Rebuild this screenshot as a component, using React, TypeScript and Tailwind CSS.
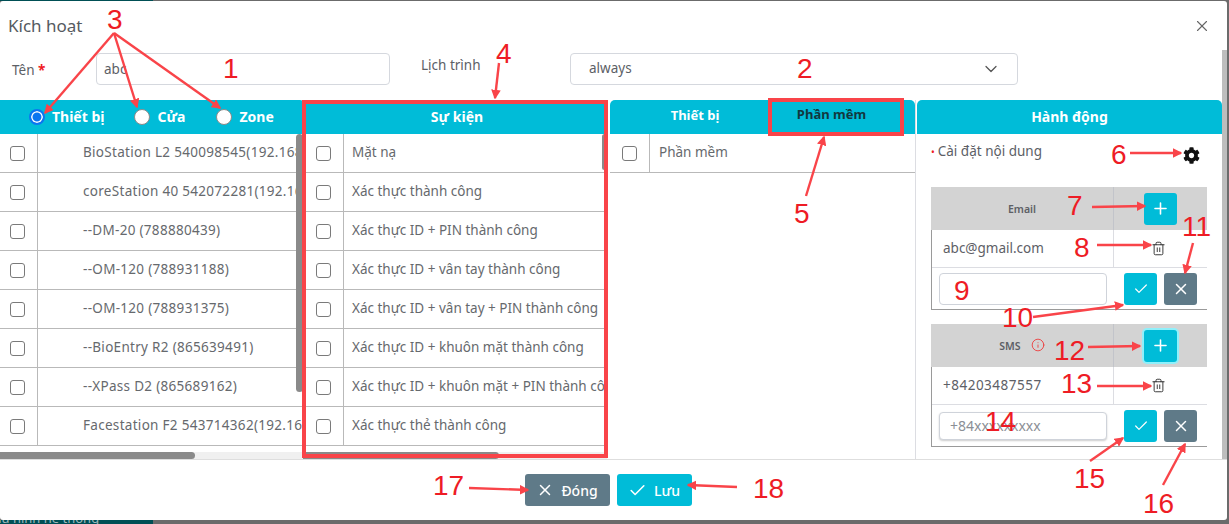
import React from "react";
import { X, Check, Plus, Trash2, ChevronDown, Info } from "lucide-react";
import { FaCog } from "react-icons/fa";

const FONT = "font-['Noto_Sans','Open_Sans',sans-serif]";

const devices = [
  "BioStation L2 540098545(192.168.1.10)",
  "coreStation 40 542072281(192.168.1.11)",
  "--DM-20 (788880439)",
  "--OM-120 (788931188)",
  "--OM-120 (788931375)",
  "--BioEntry R2 (865639491)",
  "--XPass D2 (865689162)",
  "Facestation F2 543714362(192.168.1.12)",
];
const events = [
  "Mặt nạ",
  "Xác thực thành công",
  "Xác thực ID + PIN thành công",
  "Xác thực ID + vân tay thành công",
  "Xác thực ID + vân tay + PIN thành công",
  "Xác thực ID + khuôn mặt thành công",
  "Xác thực ID + khuôn mặt + PIN thành công",
  "Xác thực thẻ thành công",
];

const Box = () => <span className="block h-[15px] w-[15px] shrink-0 rounded-[3px] border border-[#7a7a7a] bg-white" />;

function Row({ text, pad, cell }: { text: string; pad: string; cell: string }) {
  return (
    <div className="flex h-[39px] w-full shrink-0 items-center border-b border-[#b9b9b9]">
      <div className={`flex h-full shrink-0 items-center border-r border-[#b9b9b9] ${cell}`}>
        <Box />
      </div>
      <div className={`-mt-[1px] whitespace-nowrap text-[13.5px] leading-none text-[#66696d] ${pad}`}>{text}</div>
    </div>
  );
}

function Head({ children, className = "" }: { children: React.ReactNode; className?: string }) {
  return <div className={`flex h-[34px] shrink-0 items-center bg-[#00bcd8] pb-[2px] text-[14px] font-bold text-white ${className}`}>{children}</div>;
}

function Radio({ on, label, className }: { on?: boolean; label: string; className: string }) {
  return (
    <div className={`flex items-center gap-[7px] ${className}`}>
      <span className={`mt-[2px] block h-[16px] w-[16px] rounded-full ${on ? "border-2 border-[#0b76f0] bg-[#0b76f0] shadow-[inset_0_0_0_1.5px_white]" : "border border-[#8a8a8a] bg-white"}`} />
      <span>{label}</span>
    </div>
  );
}

function Sq({ tone, children, className = "" }: { tone: "cyan" | "slate"; children: React.ReactNode; className?: string }) {
  return (
    <span className={`flex h-[32px] w-[33px] items-center justify-center rounded-[3px] text-white ${tone === "cyan" ? "bg-[#00bcd8]" : "bg-[#5f7a88]"} ${className}`}>
      {children}
    </span>
  );
}

function ContactTable({ title, value, placeholder, info, focus, inputH, gap, valueClass = "" }: { title: string; value: string; placeholder?: string; info?: boolean; focus?: boolean; inputH: string; gap: string; valueClass?: string }) {
  return (
    <div className={`w-[276px] ${gap}`}>
      <div className="flex h-[43px] bg-[#d3d3d3]">
        <div className="flex w-[183px] items-center justify-center gap-[10px] border-r border-[#c2c4ca] pt-[2px] text-[10.5px] font-semibold text-[#5d6066]">
          <span>{title}</span>
          {info && <Info size={14} strokeWidth={1.4} className="-mt-[3px] text-[#ef2f2f]" />}
        </div>
        <div className="flex flex-1 items-center pl-[30px]">
          <Sq tone="cyan" className={focus ? "shadow-[0_0_0_2px_#8ff0fb]" : ""}><Plus size={19} strokeWidth={2} /></Sq>
        </div>
      </div>
      <div className="border-b border-l border-[#9a9a9a]">
        <div className="flex h-[38px] border-b border-[#dcdde2]">
          <div className={`flex w-[182px] items-center border-r border-[#dcdde2] pl-[11px] text-[13.5px] text-[#5d6066] ${valueClass}`}>{value}</div>
          <div className="flex flex-1 items-center pl-[37px]"><Trash2 size={15} strokeWidth={1.4} className="text-[#222]" /></div>
        </div>
        <div className="flex h-[41px] items-center">
          <div className="w-[182px] pl-[7px]">
            <div className={`flex w-[168px] items-center rounded-[4px] border border-[#cfd3da] bg-white pl-[10px] text-[14px] text-[#8b8f96] ${inputH}`}>{placeholder}</div>
          </div>
          <div className="flex gap-[7px] pl-[10px]">
            <Sq tone="cyan"><Check size={16} strokeWidth={1.8} /></Sq>
            <Sq tone="slate"><X size={18} strokeWidth={2} /></Sq>
          </div>
        </div>
      </div>
    </div>
  );
}

const arrows: [number, number, number, number][] = [
  [114, 33, 45, 113], [114, 33, 137, 107], [114, 33, 220, 108],
  [499, 63, 495, 98], [806, 196, 824, 137], [1130, 153, 1181, 153],
  [1092, 207, 1145, 206], [1097, 245, 1151, 245], [1193, 243, 1185, 273],
  [1033, 317, 1123, 305], [1088, 347, 1140, 346], [1097, 386, 1151, 386],
  [1090, 461, 1123, 438], [1163, 485, 1185, 444], [469, 488, 528, 490], [737, 487, 688, 485],
];

const labels: [string, string][] = [
  ["1", "left-[223px] top-[53px]"], ["2", "left-[797px] top-[53px]"], ["3", "left-[107px] top-[4px]"],
  ["4", "left-[496px] top-[38px]"], ["5", "left-[794px] top-[198px]"], ["6", "left-[1111px] top-[139px]"],
  ["7", "left-[1067px] top-[190px]"], ["8", "left-[1074px] top-[232px]"], ["9", "left-[954px] top-[275px]"],
  ["10", "left-[1002px] top-[302px]"], ["11", "left-[1182px] top-[211px]"], ["12", "left-[1054px] top-[335px]"],
  ["13", "left-[1061px] top-[368px]"], ["14", "left-[985px] top-[406px]"], ["15", "left-[1074px] top-[463px]"],
  ["16", "left-[1143px] top-[488px]"], ["17", "left-[433px] top-[470px]"], ["18", "left-[753px] top-[473px]"],
];

export default function App() {
  return (
    <div className={`relative h-[524px] w-[1229px] overflow-hidden bg-[#6b6b6b] ${FONT}`}>
      <div className="h-[1px] w-[153px] bg-[#004f55]" />
      <div className="flex h-[519px] w-[1227px] flex-col rounded-[3px] bg-white">
        <div className="flex h-[49px] shrink-0 items-center justify-between pl-[8px] pr-[16px]">
          <span className="text-[17px] text-[#555a60]">Kích hoạt</span>
          <X size={18} strokeWidth={1.5} className="text-[#666]" />
        </div>
        <div className="flex min-h-0 flex-1">
          <div className="flex min-w-0 flex-1 flex-col">
            <div className="flex h-[50px] shrink-0 text-[13.5px] text-[#5c6066]">
              <div className="w-[96px] pl-[12px] pt-[10px]">Tên <span className="font-bold text-[#ef1c25]">*</span></div>
              <div className="mt-[3px] flex h-[32px] w-[294px] items-center rounded-[4px] border border-[#d5d8de] pl-[7px]">abc</div>
              <div className="w-[180px] pl-[31px] pt-[5px]">Lịch trình</div>
              <div className="mt-[3px] flex h-[32px] w-[448px] items-center justify-between rounded-[4px] border border-[#d5d8de] pl-[18px] pr-[16px]">
                <span className="pb-[2px]">always</span>
                <ChevronDown size={20} strokeWidth={1.5} className="text-[#555]" />
              </div>
            </div>
            <div className="flex min-h-0 flex-1">
              <div className="flex w-[303px] shrink-0 flex-col">
                <Head className="rounded-tr-[3px]">
                  <Radio on label="Thiết bị" className="ml-[29px]" />
                  <Radio label="Cửa" className="ml-[30px]" />
                  <Radio label="Zone" className="ml-[31px]" />
                </Head>
                <div className="relative min-h-0 flex-1 overflow-hidden">
                  {devices.map((d) => <Row key={d} text={d} pad="pl-[45px] pr-[7px] tracking-[0.3px]" cell="w-[38px] pl-[10px]" />)}
                  <div className="absolute bottom-[67px] right-0 top-0 w-[7px] rounded-sm bg-[#8a8a8a]" />
                  <div className="absolute bottom-0 left-0 right-0 h-[7px] bg-[#f0f0f0]"><div className="h-full w-[195px] rounded-r bg-[#8a8a8a]" /></div>
                </div>
              </div>
              <div className="flex w-[304px] shrink-0 flex-col">
                <Head className="justify-center pl-[4px]">Sự kiện</Head>
                <div className="relative min-h-0 flex-1 overflow-hidden bg-white">
                  {events.map((d) => <Row key={d} text={d} pad="pl-[8px]" cell="w-[41px] pl-[13px]" />)}
                  <div className="absolute right-0 top-0 h-[36px] w-[5px] rounded-sm bg-[#8a8a8a]" />
                  <div className="absolute bottom-0 left-0 right-0 h-[7px] bg-[#f0f0f0]"><div className="h-full w-[196px] rounded-r bg-[#8a8a8a]" /></div>
                </div>
              </div>
              <div className="ml-[3px] flex w-[306px] shrink-0 flex-col border-r border-[#dcdde2]">
                <Head className="rounded-t-[5px] text-center">
                  <span className="w-[170px] text-[13px]">Thiết bị</span>
                  <span className="-mt-[3px] w-[103px] text-[13px] text-[#12383f]">Phần mềm</span>
                </Head>
                <Row text="Phần mềm" pad="pl-[9px]" cell="w-[40px] pl-[12px]" />
              </div>
              <div className="ml-[1px] flex min-w-0 flex-1 flex-col">
                <Head className="justify-center rounded-t-[5px]">Hành động</Head>
                <div className="min-h-0 flex-1 overflow-hidden pl-[14px]">
                  <div className="flex h-[53px] items-start">
                    <span className="w-[252px] pt-[7px] text-[13.5px] text-[#5c6066]"><span className="mr-[3px] text-[10px] text-[#ef1c25]">•</span>Cài đặt nội dung</span>
                    <FaCog size={17} className="mt-[13px] text-[#111]" />
                  </div>
                  <ContactTable title="Email" value="abc@gmail.com" inputH="h-[32px]" gap="mb-[14px]" />
                  <ContactTable title="SMS" value="+84203487557" valueClass="tracking-[0.5px]" placeholder="+84xxxxxxxxx" info focus inputH="h-[28px] shadow-[0_1px_2px_#ccc]" gap="" />
                </div>
              </div>
            </div>
          </div>
          <div className="w-[5px] shrink-0 bg-[#bdbdbd]" />
        </div>
        <div className="flex h-[61px] shrink-0 items-start justify-center gap-[7px] border-t border-[#dedede] pr-[11px] pt-[14px] text-[14px] font-medium text-white">
          <span className="flex h-[32px] w-[85px] items-center justify-center gap-[7px] rounded-[3px] bg-[#5f7a88]"><X size={18} strokeWidth={2} />Đóng</span>
          <span className="flex h-[32px] w-[75px] items-center justify-center gap-[7px] rounded-[3px] bg-[#00bcd8]"><Check size={19} strokeWidth={2} />Lưu</span>
        </div>
      </div>
      <div className="h-[4px] w-[153px] overflow-hidden bg-[#004f55]">
        <div className="-ml-[14px] -mt-[9px] whitespace-nowrap text-[13px] leading-[14px] text-[#9fb8bb]">Cấu hình hệ thống</div>
      </div>

      <div className="absolute left-[302px] top-[100px] h-[358px] w-[306px] border-[4px] border-[#f94449]" />
      <div className="absolute left-[768px] top-[98px] h-[38px] w-[136px] border-[4px] border-[#f94449]" />
      <svg className="absolute left-0 top-0" width="1229" height="524">
        <defs>
          <marker id="a" markerWidth="4" markerHeight="4" refX="3.4" refY="2" orient="auto" markerUnits="strokeWidth">
            <path d="M0 0L4 2L0 4z" fill="#f94449" />
          </marker>
        </defs>
        {arrows.map(([x1, y1, x2, y2], i) => (
          <line key={i} x1={x1} y1={y1} x2={x2} y2={y2} stroke="#f94449" strokeWidth="2.4" markerEnd="url(#a)" />
        ))}
      </svg>
      {labels.map(([t, c]) => (
        <span key={t} className={`absolute font-['Liberation_Sans',sans-serif] text-[28px] leading-[32px] text-[#ee1c25] ${c}`}>{t}</span>
      ))}
    </div>
  );
}
